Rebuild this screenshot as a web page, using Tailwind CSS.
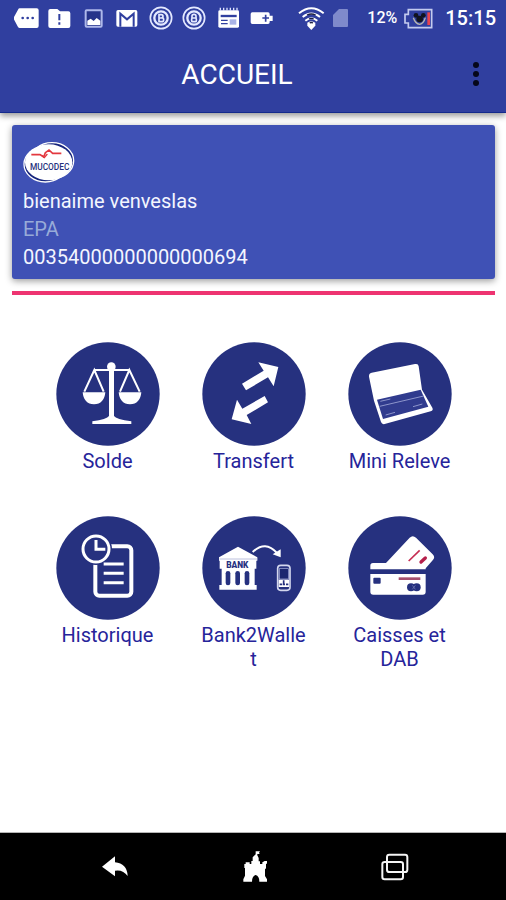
<!DOCTYPE html>
<html lang="fr">
<head>
  <meta charset="UTF-8" />
  <meta name="viewport" content="width=device-width, initial-scale=1.0" />
  <title>Accueil</title>
  <script src="https://cdn.jsdelivr.net/npm/@tailwindcss/browser@4"></script>
</head>
<body class="flex min-h-screen flex-col bg-white font-['Roboto',sans-serif] text-[#26249a]">

  <header class="relative bg-[#303f9f] text-white border-b border-[#142a8c] shadow-[0_3px_6px_rgba(0,0,0,0.4)]">
    <!-- Status bar -->
    <div class="flex h-9 items-center pl-3.5 pr-2.5">
      <div class="flex w-[260px] justify-between">
        <svg class="size-[26px]" viewBox="42 12 78 78" fill="#fff">
          <path d="M59 22h51q6 0 6 6v47q0 6-6 6H59q-3 0-5-3L40 52l14-26q2-4 5-4z" />
          <g fill="#303f9f"><circle cx="68" cy="51" r="4" /><circle cx="83" cy="51" r="4" /><circle cx="98" cy="51" r="4" /></g>
        </svg>
        <svg class="size-[26px]" viewBox="142 12 78 78" fill="#fff">
          <path d="M152 24h21l8 7h25q6 0 6 6v38q0 6-6 6h-54q-6 0-6-6V30q0-6 6-6z" />
          <path d="M179 39v19M179 64v7" stroke="#303f9f" stroke-width="6" />
        </svg>
        <svg class="size-[26px]" viewBox="242 12 78 78">
          <rect x="256" y="28" width="48" height="49" rx="3" fill="#26338a" stroke="#aeb8ea" stroke-width="6" />
          <path d="M261 72V59l10-6 9 7 9-9 11 8v13z" fill="#fff" />
        </svg>
        <svg class="size-[26px]" viewBox="343 12 78 78">
          <rect x="350" y="27" width="63" height="50" rx="5" fill="#fff" />
          <path d="M362 77V38l20 17 20-17v39" fill="none" stroke="#303f9f" stroke-width="6" />
        </svg>
        <svg class="size-[26px]" viewBox="443 12 78 78" fill="none" stroke="#e4e9ff">
          <circle cx="482" cy="51" r="32" stroke-width="5" />
          <circle cx="482" cy="51" r="20" stroke-width="7" />
          <path d="M476 41v21h8q6 0 6-6t-6-5h-8 7q5 0 5-5t-5-5z" stroke-width="5" />
        </svg>
        <svg class="size-[26px]" viewBox="544 12 78 78" fill="none" stroke="#e4e9ff">
          <circle cx="583" cy="51" r="32" stroke-width="5" />
          <circle cx="583" cy="51" r="20" stroke-width="7" />
          <path d="M577 51v-6q0-5 6-5t6 5v6" stroke-width="5" />
          <rect x="576" y="51" width="14" height="11" rx="3" stroke-width="5" />
        </svg>
        <svg class="size-[26px]" viewBox="645 12 78 78">
          <rect x="655" y="28" width="62" height="52" rx="4" fill="#fff" />
          <path d="M661 20v9M671 20v9M681 20v9M691 20v9M701 20v9M711 20v9" stroke="#dce2ff" stroke-width="4" />
          <path d="M662 45h48" stroke="#303f9f" stroke-width="7" />
          <path d="M663 58h20M663 68h20" stroke="#303f9f" stroke-width="4" />
          <rect x="689" y="55" width="20" height="16" fill="#a9b3e6" />
        </svg>
        <svg class="size-[26px]" viewBox="744 12 78 78">
          <path d="M757 34h47q5 0 5 5v5h9v16h-9v4q0 5-5 5h-47q-5 0-5-5V39q0-5 5-5z" fill="#fff" />
          <path d="M797 41v21M787 51h20" stroke="#303f9f" stroke-width="5" />
        </svg>
      </div>

      <div class="ml-auto flex items-center">
        <svg class="h-[26px] w-7" viewBox="128 12 84 78" fill="none" stroke="#fff">
          <path d="M134 37Q171 7 208 37" stroke-width="6" />
          <path d="M145 48Q171 27 197 48" stroke-width="6" />
          <path d="M153 59Q171 45 189 59" stroke-width="6" />
          <path d="M159 65q12-9 24 0v9l-12 13-12-13z" fill="#fff" stroke="none" />
          <path d="M158 42q13-6 26 0M164 54q7-4 14 0M166 66q5-3 10 0" stroke="#1c1f45" stroke-width="4" />
        </svg>
        <svg class="ml-2 h-5 w-4" viewBox="0 0 16 20"><path d="M6 1h8q1 0 1 1v16q0 1-1 1H1q-1 0-1-1V7z" fill="#7f8acb" /></svg>
        <span class="ml-[18px] text-base font-medium leading-5">12%</span>
        <svg class="ml-1.5 h-[22px] w-[30px]" viewBox="453 18 90 66">
          <path d="M469 26h70v54h-70v-14h-10V40h10z" fill="#303f9f" stroke="#c3cbef" stroke-width="5" />
          <rect x="526" y="34" width="8" height="38" fill="#e8434f" />
          <path d="M484 50q6 18 19 20 12-2 17-20" fill="none" stroke="#b9b7ae" stroke-width="4" />
          <g fill="#11131f"><circle cx="492" cy="43" r="7" /><circle cx="514" cy="43" r="7" /><circle cx="503" cy="54" r="10" /></g>
        </svg>
        <span class="ml-3 text-xl font-medium leading-5">15:15</span>
      </div>
    </div>

    <!-- Title bar -->
    <div class="flex h-[76px] items-center pl-3 pr-4">
      <h1 class="flex-1 pt-0.5 text-center text-[28px] leading-8">ACCUEIL</h1>
      <button type="button" aria-label="Menu" class="flex h-10 w-7 items-center justify-center">
        <svg class="h-6 w-2" viewBox="0 0 8 24" fill="#05071a"><circle cx="4" cy="3" r="3" /><circle cx="4" cy="12" r="3" /><circle cx="4" cy="21" r="3" /></svg>
      </button>
    </div>
  </header>

  <main class="flex-1 pl-3 pr-[11px] pt-3">
    <!-- Account card -->
    <section class="rounded-[3px] bg-[#3f51b5] px-[11px] pb-2 pt-4 text-xl leading-7 text-[#f4f6ff] shadow-[0_2px_7px_rgba(0,0,0,0.4)]">
      <svg class="mb-0.5 h-11 w-[52px]" viewBox="66 60 156 132" role="img" aria-label="MUCODEC">
        <ellipse cx="153" cy="119" rx="65" ry="54" fill="#16257d" stroke="#fff" stroke-width="4" />
        <ellipse cx="133" cy="130" rx="64" ry="53" fill="#16257d" stroke="#fff" stroke-width="4" />
        <ellipse cx="143" cy="124" rx="71" ry="54" fill="#fff" />
        <path d="M91 101h26l11 7 5-13 11-8 11 10h26" fill="none" stroke="#e3383f" stroke-width="5" />
        <path d="M122 103l8 7 9-11" fill="none" stroke="#e3383f" stroke-width="4" />
        <text x="146" y="147" text-anchor="middle" font-family="Roboto, sans-serif" font-size="25" font-weight="500" fill="#25307c">MUCODEC</text>
      </svg>
      <p>bienaime venveslas</p>
      <p class="text-[#98abd8]">EPA</p>
      <p>00354000000000000694</p>
    </section>
    <hr class="mt-3 border-0 h-1 bg-[#ee3471]" />

    <!-- Actions -->
    <nav class="mx-auto mt-[47px] grid max-w-[438px] grid-cols-3 gap-y-[43px] text-xl leading-6">
      <button type="button" class="flex flex-col items-center">
        <svg class="size-[104px]" viewBox="45 36 312 312" fill="#fff">
          <circle cx="201" cy="192" r="155" fill="#26317f" />
          <circle cx="211" cy="110" r="13" />
          <path d="M204 112h15v146q6 10 52 16v8H154v-8q44-6 50-16z" />
          <path d="M160 120h104M130 185l30-65 28 65M237 185l28-65 31 65" fill="none" stroke="#fff" stroke-width="6" />
          <path d="M125 187h68q-3 35-34 36-31-1-34-36zM233 187h68q-3 35-34 36-31-1-34-36z" />
        </svg>
        <span class="mt-[3px] w-[106px]">Solde</span>
      </button>
      <button type="button" class="flex flex-col items-center">
        <svg class="size-[104px]" viewBox="45 36 312 312" fill="#fff">
          <circle cx="201" cy="192" r="155" fill="#26317f" />
          <path d="M165 161l65-39-16-25 60 14-14 58-17-27-66 39z" />
          <path d="M233 198l10 19-64 38 14 27-59-14 16-59 16 27z" />
        </svg>
        <span class="mt-[3px] w-[106px]">Transfert</span>
      </button>
      <button type="button" class="flex flex-col items-center">
        <svg class="size-[104px]" viewBox="45 36 312 312" fill="#fff">
          <circle cx="201" cy="192" r="155" fill="#26317f" />
          <path d="M116 128l130-26q10-2 11 7l10 70 31 54q4 8-5 11l-138 38q-8 2-11-6l-21-64-15-72q-1-10 8-12z" />
          <path d="M132 209l131-30 23 51-136 37z" fill="#303b8e" />
          <path d="M140 229l132-31M142 214l30-7M158 255l28-8M240 230l28-8" stroke="#8d95cb" stroke-width="3" />
        </svg>
        <span class="mt-[3px] w-[106px]">Mini Releve</span>
      </button>
      <button type="button" class="flex flex-col items-center">
        <svg class="size-[104px]" viewBox="45 33 312 312" fill="none" stroke="#fff" stroke-width="12">
          <circle cx="201" cy="189" r="155" fill="#26317f" stroke="none" />
          <rect x="163" y="124" width="108" height="148" rx="12" />
          <circle cx="165" cy="132" r="48" fill="#26317f" stroke="none" />
          <circle cx="165" cy="132" r="39" stroke-width="9" />
          <path d="M165 105v28h28" stroke-width="9" />
          <path d="M188 177h60M188 205h60M188 233h60" stroke-width="9" />
        </svg>
        <span class="mt-[3px] w-[106px]">Historique</span>
      </button>
      <button type="button" class="flex flex-col items-center">
        <svg class="size-[104px]" viewBox="45 33 312 312" fill="#fff">
          <circle cx="201" cy="189" r="155" fill="#26317f" />
          <path d="M153 125l58 32v10h-3v24h-5v49h6v14H97v-14h7v-49h-6v-24h-2v-10z" />
          <path d="M97 162h115" stroke="#9aa1cc" stroke-width="2" />
          <g fill="#26317f">
            <rect x="116" y="198" width="14" height="43" rx="7" /><rect x="145" y="198" width="14" height="43" rx="7" /><rect x="173" y="198" width="14" height="43" rx="7" />
          </g>
          <text x="151" y="188" text-anchor="middle" font-family="Roboto, sans-serif" font-size="25" font-weight="900" fill="#26317f">BANK</text>
          <path d="M197 141q38-36 73 3" fill="none" stroke="#fff" stroke-width="6" />
          <path d="M257 148l24-15v24z" />
          <rect x="272" y="181" width="37" height="75" rx="9" fill="none" stroke="#d3d7ee" stroke-width="5" />
          <rect x="277" y="191" width="27" height="31" fill="#1b266f" stroke="#aeb5de" stroke-width="2" />
          <path d="M275 224h31v22h-31z" />
          <path d="M290 226v10M278 238h7M287 238h7M297 238h7" stroke="#26317f" stroke-width="5" />
        </svg>
        <span class="mt-[3px] w-[106px] wrap-anywhere">Bank2Wallet</span>
      </button>
      <button type="button" class="flex flex-col items-center">
        <svg class="size-[104px]" viewBox="45 33 312 312" fill="#fff">
          <circle cx="201" cy="189" r="155" fill="#26317f" />
          <path d="M120 174h39l71-76q9-9 19 0l50 50q9 9 0 18l-21 24v3H112v-11q0-8 8-8z" />
          <path d="M227 168l33-32" stroke="#c52c52" stroke-width="5" />
          <path d="M264 171l13-12" stroke="#b51f4b" stroke-width="10" stroke-linecap="round" />
          <path d="M112 207h166v53q0 9-9 9H121q-9 0-9-9z" />
          <path d="M197 221h65" stroke="#a6506f" stroke-width="8" />
          <rect x="121" y="218" width="22" height="18" rx="3" fill="#26317f" />
          <circle cx="234" cy="247" r="12" fill="#26317f" /><circle cx="251" cy="247" r="12" fill="#26317f" />
          <path d="M238 241l9 12M247 241l-9 12" stroke="#7b83b8" stroke-width="2" />
        </svg>
        <span class="mt-[3px] w-[106px]">Caisses et DAB</span>
      </button>
    </nav>
  </main>

  <!-- System navigation -->
  <footer class="flex h-[68px] items-center justify-around border-t border-[#b5b5b5] bg-black pl-11 pr-10">
    <button type="button" aria-label="Retour">
      <svg class="h-6 w-7" viewBox="58 90 84 72" fill="#fff"><path d="M61 125l39-31v18q36 3 38 41-14-20-38-16v17z" /></svg>
    </button>
    <button type="button" aria-label="Écran d'accueil">
      <svg class="h-8 w-6" viewBox="485 77 72 96" fill="#fff">
        <path d="M486 169v-7l5-11v-23h-2v-12h4v-5h12v5h5v-9h4V96l9-9v-9h13l-3 4 2 4h-7v4l4 8v10h4v8h7v-5l6-3v-1h11l-3 4 2 4h-5v14l-3 3v20l6 10v7h-23q0-17-11-20-11 3-11 20z" />
      </svg>
    </button>
    <button type="button" aria-label="Applications récentes">
      <svg class="h-7 w-7" viewBox="901 82 84 84" fill="none" stroke="#f5f5f5" stroke-width="6">
        <rect x="919" y="87" width="61" height="52" rx="7" /><rect x="905" y="109" width="62" height="52" rx="7" />
      </svg>
    </button>
  </footer>
</body>
</html>
